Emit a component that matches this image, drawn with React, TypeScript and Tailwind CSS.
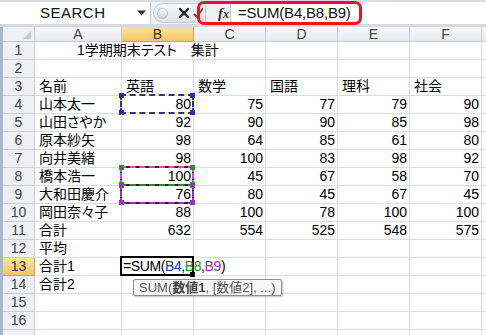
import React from 'react'

const cols = ['A', 'B', 'C', 'D', 'E', 'F', '']

type Row = (string | number)[]

const rows: Row[] = [
  ['1学期期末テスト　集計'],
  [],
  ['名前', '英語', '数学', '国語', '理科', '社会'],
  ['山本太一', 80, 75, 77, 79, 90],
  ['山田さやか', 92, 90, 90, 85, 98],
  ['原本紗矢', 98, 64, 85, 61, 80],
  ['向井美緒', 98, 100, 83, 98, 92],
  ['橋本浩一', 100, 45, 67, 58, 70],
  ['大和田慶介', 76, 80, 45, 67, 45],
  ['岡田奈々子', 88, 100, 78, 100, 100],
  ['合計', 632, 554, 525, 548, 575],
  ['平均'],
  ['合計1'],
  ['合計2'],
  [],
  [],
  [],
]

// colored reference boxes for =SUM(B4,B8,B9)
const marquees: Record<number, { color: string; under: string; handle: string; topLine?: string }> = {
  4: { color: '#2b2bb0', under: '#ffff66', handle: 'bg-[#2b2bb0]' },
  8: { color: '#d050c8', under: '#222222', handle: 'bg-[#2e8b2e]' },
  9: { color: '#a030c0', under: '#222222', handle: 'bg-[#a030c0]', topLine: '#2e8b2e' },
}

function Marquee({ color, under, handle, topLine }: { color: string; under: string; handle: string; topLine?: string }) {
  return (
    <div className="absolute -left-[2px] -top-[2px] -right-[1px] -bottom-[1px] z-20 pointer-events-none">
      <div className="absolute inset-0 border-2" style={{ borderColor: under }} />
      <div className="absolute inset-0 border-2 border-dashed" style={{ borderColor: color }} />
      {topLine && <div className="absolute inset-x-0 top-0 border-t-2 border-dashed" style={{ borderColor: topLine }} />}
      <div className={`absolute -left-[1px] -top-[1px] w-[5px] h-[5px] ${handle}`} />
      <div className={`absolute -left-[1px] -bottom-[1px] w-[5px] h-[5px] ${handle}`} />
      <div className={`absolute -right-[1px] -top-[1px] w-[5px] h-[5px] ${handle}`} />
      <div className={`absolute -right-[1px] -bottom-[1px] w-[5px] h-[5px] ${handle}`} />
    </div>
  )
}

function ActiveCell() {
  return (
    <>
      <div className="absolute -left-[2px] -top-[2px] -right-[1px] -bottom-[1px] z-20 border-2 border-black bg-white">
        <div className="absolute -right-[3px] -bottom-[3px] w-[5px] h-[5px] bg-black" />
      </div>
      <div className="absolute left-[1px] bottom-[0px] z-30 text-[14px] leading-[17px] tracking-[-0.4px] whitespace-nowrap">
        =SUM(<span className="text-[#1f33b8]">B4</span>,<span className="text-[#1e8a1e]">B8</span>,<span className="text-[#9b2fb0]">B9</span>)
      </div>
      {/* argument tooltip */}
      <div className="absolute left-[11px] top-[21px] z-30 h-[17px] px-[5px] flex items-center rounded-[2px] border border-[#8d8f93] bg-[#f7f7f7] shadow-[1px_1px_2px_rgba(0,0,0,0.25)] text-[13px] leading-none text-[#555] whitespace-nowrap">
        SUM(<span className="font-semibold text-[#444]">数値1</span>, [数値2], ...)
      </div>
    </>
  )
}

const selHeader = 'bg-gradient-to-b from-[#fbe3a4] to-[#f4c65e] border-[#c9a24a] text-[#333]'

export default function App() {
  return (
    <div className="w-[486px] h-[335px] overflow-hidden bg-white text-black font-[family-name:'Liberation_Sans','Noto_Sans_CJK_JP',sans-serif] [font-feature-settings:'palt']">
      {/* formula bar */}
      <div className="relative flex h-[24px] bg-[#eef1f5] border-t-2 border-[#d9dee5]">
        <div className="flex items-center w-[151px] h-full bg-white border-r border-[#c5cbd3] pl-[40px] pr-[4px]">
          <span className="text-[15px] tracking-[0.5px] text-[#111]">SEARCH</span>
          <svg className="ml-auto" width="9" height="6" viewBox="0 0 9 6">
            <path d="M0 0.5h9L4.5 5.5z" fill="#333" />
          </svg>
        </div>
        <div className="flex items-center w-[79px] h-full">
          <div className="flex items-center h-[20px] ml-[2px] pl-[3px] pr-[2px] rounded-l-full bg-gradient-to-b from-[#f8f9fb] to-[#dfe3e8] border border-[#c5cbd3]">
            <div className="w-[11px] h-[11px] rounded-full bg-gradient-to-b from-white to-[#cdd2d9] border border-[#b9bfc7]" />
            <svg className="ml-[10px]" width="12" height="12" viewBox="0 0 12 12">
              <path d="M2 2l8 8M10 2l-8 8" stroke="#222" strokeWidth="2.4" strokeLinecap="round" />
            </svg>
            <svg className="ml-[3px]" width="10" height="12" viewBox="0 0 10 12">
              <path d="M1 7l3 3 6-9" stroke="#4a5a4a" strokeWidth="2" fill="none" />
            </svg>
          </div>
          <span className="ml-[12px] text-[15px] italic font-bold font-[family-name:'Liberation_Serif',serif] text-[#333]">
            f<span className="text-[12px]">x</span>
          </span>
        </div>
        <div className="flex-1 h-full bg-white border-l border-[#c5cbd3] flex items-center pl-[7px]">
          <span className="text-[15px] tracking-[-0.2px] text-[#111]">=SUM(B4,B8,B9)</span>
        </div>
        {/* red highlight drawn over the bar */}
        <div className="absolute left-[197px] -top-[1px] w-[165px] h-[24px] rounded-[7px] border-[3px] border-[#e8141f]" />
      </div>
      <div className="h-[3px] bg-[#d5dae1]" />

      {/* sheet */}
      <div className="border-l-[3px] border-[#a8b8cc]">
        <div className="grid grid-cols-[32px_87px_72px_72px_72px_72px_72px_1fr]">
          <div className="relative h-[15px] bg-[#eef0f3] border-r border-b border-[#c3c8cf] flex items-end justify-end pr-[3px] pb-[2px]">
            <svg width="8" height="8" viewBox="0 0 8 8">
              <path d="M8 0v8H0z" fill="#c4c8ce" />
            </svg>
          </div>
          {cols.map((c, i) => (
            <div
              key={i}
              className={`h-[15px] flex items-center justify-center text-[14px] leading-none border-r border-b ${
                c === 'B' ? selHeader : 'bg-gradient-to-b from-[#f7f8fa] to-[#e7eaee] border-[#c9cdd3] text-[#444]'
              }`}
            >
              {c}
            </div>
          ))}

          {rows.map((r, ri) => {
            const num = ri + 1
            return (
              <React.Fragment key={ri}>
                <div
                  className={`h-[18px] flex items-center justify-center text-[14px] border-r border-b ${
                    num === 13 ? selHeader : 'bg-[#eef0f3] border-[#c9cdd3] text-[#444]'
                  }`}
                >
                  {num < 17 ? num : ''}
                </div>
                {cols.map((_, ci) => {
                  const v = r[ci]
                  const isNum = typeof v === 'number'
                  const inB = ci === 1
                  const m = inB ? marquees[num] : undefined
                  const active = inB && num === 13
                  return (
                    <div
                      key={ci}
                      className={`relative h-[18px] flex items-end border-r border-b border-[#dadcdf] text-[14px] leading-[17px] whitespace-nowrap ${
                        isNum ? 'justify-end pr-[2px]' : num === 1 ? 'pl-[42px]' : 'pl-[4px]'
                      } ${ci === 0 || m || active ? 'z-10' : 'overflow-hidden'}`}
                    >
                      {v !== undefined ? <span className="relative z-30">{String(v)}</span> : ''}
                      {m && <Marquee {...m} />}
                      {active && <ActiveCell />}
                    </div>
                  )
                })}
              </React.Fragment>
            )
          })}
        </div>
      </div>
    </div>
  )
}
